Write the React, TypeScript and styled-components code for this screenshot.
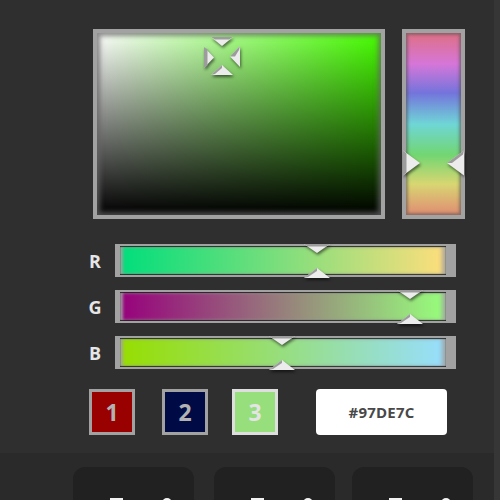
import React from 'react';
import styled, { createGlobalStyle } from 'styled-components';

const GlobalStyle = createGlobalStyle`
  html, body { margin: 0; padding: 0; background: #2e2e2e; overflow: hidden; }
  body { font-family: "Open Sans", "Noto Sans", sans-serif; }
`;

const current = { r: 151, g: 222, b: 124 };

const toHsv = ({ r, g, b }: typeof current) => {
    const max = Math.max(r, g, b);
    const min = Math.min(r, g, b);
    const d = max - min;
    let h = 0;
    if (d) {
        if (max === r) h = 60 * (((g - b) / d) % 6);
        else if (max === g) h = 60 * ((b - r) / d + 2);
        else h = 60 * ((r - g) / d + 4);
    }
    return { h: (h + 360) % 360, s: max ? d / max : 0, v: max / 255 };
};

const hsv = toHsv(current);
const hex = '#' + [current.r, current.g, current.b].map((n) => n.toString(16).padStart(2, '0')).join('').toUpperCase();

type Dir = 'up' | 'down' | 'left' | 'right';

// little bevelled triangle used by every handle
const Tri = ({ dir, w, h }: { dir: Dir; w: number; h: number }) => {
    let body = '';
    let bevel = '';
    if (dir === 'down') {
        body = `0,0 ${w},0 ${w / 2},${h}`;
        bevel = `0,0 ${w},0 ${w - 4},2.5 4,2.5`;
    } else if (dir === 'up') {
        body = `${w / 2},0 ${w},${h} 0,${h}`;
        bevel = `${w / 2},0 0,${h} 4,${h - 1} ${w / 2},3`;
    } else if (dir === 'right') {
        body = `0,0 ${w},${h / 2} 0,${h}`;
        bevel = `0,0 3.5,${h * 0.12} 3.5,${h * 0.88} 0,${h}`;
    } else {
        body = `${w},0 0,${h / 2} ${w},${h}`;
        bevel = `${w},0 0,${h / 2} 5,${h / 2} ${w - 1},4`;
    }
    return (
        <TriSvg width={w} height={h} viewBox={`0 0 ${w} ${h}`}>
            <polygon points={body} fill='#ececec' />
            <polygon points={bevel} fill='#9c9c9c' />
        </TriSvg>
    );
};

const TriSvg = styled.svg`
    display: block;
    overflow: visible;
    filter: drop-shadow(1px 2px 1.5px rgba(0, 0, 0, 0.55));
`;

const Page = styled.div`
    display: flex;
    width: 500px;
    height: 500px;
    overflow: hidden;
`;

const Main = styled.div`
    flex: 1;
    display: flex;
    flex-direction: column;
    overflow: hidden;
`;

const Scrollbar = styled.div`
    width: 6px;
    background: #363636;
`;

const Editor = styled.section`
    flex-shrink: 0;
    height: 453px;
    box-sizing: border-box;
    padding-top: 29px;
    background: #2f2f2f;
    display: flex;
    flex-direction: column;
    align-items: flex-start;
`;

const PickerRow = styled.div`
    display: flex;
    gap: 17px;
    margin-left: 93px;
`;

const Frame = styled.div`
    position: relative;
    box-sizing: border-box;
    height: 190px;
    border: 4px solid #a2a2a2;
`;

const SatField = styled(Frame)<{ $hue: number }>`
    width: 292px;
    background: linear-gradient(to top, #000, rgba(0, 0, 0, 0)),
        linear-gradient(to right, #fff, hsl(${(p) => p.$hue}, 100%, 50%));
    box-shadow: inset 0 0 5px 3px rgba(100, 100, 100, 0.75);
`;

const HueBar = styled(Frame)`
    width: 63px;
    background: linear-gradient(
        to bottom,
        #de7084 0%,
        #d676d8 17%,
        #7474dc 33%,
        #6fd6d6 50%,
        #72d672 67%,
        #d8d672 83%,
        #e08c72 100%
    );
    box-shadow: inset 0 0 3px 2px rgba(80, 80, 80, 0.55);
`;

const Crosshair = styled.div`
    position: absolute;
    width: 0;
    height: 0;
`;

const CrossPiece = styled.div<{ $x: number; $y: number }>`
    position: absolute;
    left: ${(p) => p.$x}px;
    top: ${(p) => p.$y}px;
`;

const HueArrow = styled.div<{ $side: 'left' | 'right' }>`
    position: absolute;
    ${(p) => (p.$side === 'left' ? 'left: -3px;' : 'right: -3px;')}
    transform: translateY(-50%);
`;

const SliderList = styled.div`
    display: flex;
    flex-direction: column;
    gap: 13px;
    margin: 25px 0 0 80px;
`;

const SliderRow = styled.div`
    display: flex;
    align-items: center;
`;

const Channel = styled.span`
    width: 30px;
    margin-right: 5px;
    text-align: center;
    color: #e6e6e6;
    font-weight: 700;
    font-size: 18px;
`;

const Track = styled.div`
    position: relative;
    box-sizing: border-box;
    width: 341px;
    height: 33px;
    padding: 2px 10px 2px 5px;
    background: #a2a2a2;
`;

const Fill = styled.div<{ $from: string; $to: string }>`
    height: 100%;
    background: linear-gradient(to right, ${(p) => p.$from}, ${(p) => p.$to});
    box-shadow: inset 0 1px 1px rgba(0, 0, 0, 0.75), inset 0 -1px 1px rgba(0, 0, 0, 0.75),
        inset 3px 0 3px rgba(162, 162, 162, 0.9), inset -4px 0 4px rgba(162, 162, 162, 0.9);
`;

const Thumb = styled.div`
    position: absolute;
    top: 0;
    bottom: -1px;
    display: flex;
    flex-direction: column;
    justify-content: space-between;
`;

const SwatchRow = styled.div`
    display: flex;
    align-items: center;
    margin: 20px 0 0 89px;
`;

const Swatch = styled.div<{ $fill: string; $active?: boolean; $gap: number }>`
    box-sizing: border-box;
    width: 46px;
    height: 46px;
    margin-right: ${(p) => p.$gap}px;
    border: 3px solid ${(p) => (p.$active ? '#dedede' : '#a2a2a2')};
    background: ${(p) => p.$fill};
    display: flex;
    align-items: center;
    justify-content: center;
    color: ${(p) => (p.$active ? '#e4e4e4' : '#b2b2b2')};
    font-weight: 700;
    font-size: 23px;
`;

const HexBox = styled.div`
    width: 131px;
    height: 46px;
    margin-left: 15px;
    border-radius: 4px;
    background: #fff;
    display: flex;
    align-items: center;
    justify-content: center;
    color: #484848;
    font-weight: 700;
    font-size: 15px;
    letter-spacing: 0.2px;
`;

const Footer = styled.footer`
    flex: 1;
    background: #2a2a2a;
    display: flex;
    align-items: flex-start;
    padding: 14px 0 0 73px;
`;

const Card = styled.div<{ $gap: number }>`
    position: relative;
    flex-shrink: 0;
    width: 121px;
    height: 80px;
    margin-right: ${(p) => p.$gap}px;
    border-radius: 12px;
    background: #212121;
`;

const CardIcon = styled.svg`
    position: absolute;
    left: 34px;
    top: 30px;
`;

const sliders = [
    { label: 'R', from: `rgb(0,${current.g},${current.b})`, to: `rgb(255,${current.g},${current.b})`, value: current.r },
    { label: 'G', from: `rgb(${current.r},0,${current.b})`, to: `rgb(${current.r},255,${current.b})`, value: current.g },
    { label: 'B', from: `rgb(${current.r},${current.g},0)`, to: `rgb(${current.r},${current.g},255)`, value: current.b },
];

const swatches = [
    { n: 1, fill: '#990000', gap: 27 },
    { n: 2, fill: '#000b45', gap: 24 },
    { n: 3, fill: hex, gap: 23, active: true },
];

export default function App() {
    return (
        <Page>
            <GlobalStyle />
            <Main>
                <Editor>
                    <PickerRow>
                        <SatField $hue={hsv.h}>
                            <Crosshair style={{ left: `${hsv.s * 100}%`, top: `${(1 - hsv.v) * 100}%` }}>
                                <CrossPiece $x={-11} $y={-20}>
                                    <Tri dir='down' w={22} h={9} />
                                </CrossPiece>
                                <CrossPiece $x={-11} $y={8}>
                                    <Tri dir='up' w={22} h={10} />
                                </CrossPiece>
                                <CrossPiece $x={-18} $y={-10}>
                                    <Tri dir='right' w={10} h={21} />
                                </CrossPiece>
                                <CrossPiece $x={8} $y={-11}>
                                    <Tri dir='left' w={10} h={21} />
                                </CrossPiece>
                            </Crosshair>
                        </SatField>
                        <HueBar>
                            <HueArrow $side='left' style={{ top: `${(1 - hsv.h / 360) * 100}%` }}>
                                <Tri dir='right' w={17} h={25} />
                            </HueArrow>
                            <HueArrow $side='right' style={{ top: `${(1 - hsv.h / 360) * 100}%` }}>
                                <Tri dir='left' w={17} h={25} />
                            </HueArrow>
                        </HueBar>
                    </PickerRow>

                    <SliderList>
                        {sliders.map((s) => (
                            <SliderRow key={s.label}>
                                <Channel>{s.label}</Channel>
                                <Track>
                                    <Fill $from={s.from} $to={s.to} />
                                    <Thumb style={{ left: 5 + (s.value / 255) * 333 - 13 }}>
                                        <Tri dir='down' w={26} h={9} />
                                        <Tri dir='up' w={26} h={10} />
                                    </Thumb>
                                </Track>
                            </SliderRow>
                        ))}
                    </SliderList>

                    <SwatchRow>
                        {swatches.map((s) => (
                            <Swatch key={s.n} $fill={s.fill} $gap={s.gap} $active={s.active}>
                                {s.n}
                            </Swatch>
                        ))}
                        <HexBox>{hex}</HexBox>
                    </SwatchRow>
                </Editor>

                <Footer>
                    {[20, 17, 0].map((gap, i) => (
                        <Card key={i} $gap={gap}>
                            <CardIcon width='70' height='20' viewBox='0 0 70 20'>
                                <rect x='3' y='1' width='13' height='12' fill='#f2f2f2' />
                                <circle cx='60' cy='6' r='5' fill='#f2f2f2' />
                            </CardIcon>
                        </Card>
                    ))}
                </Footer>
            </Main>
            <Scrollbar />
        </Page>
    );
}
